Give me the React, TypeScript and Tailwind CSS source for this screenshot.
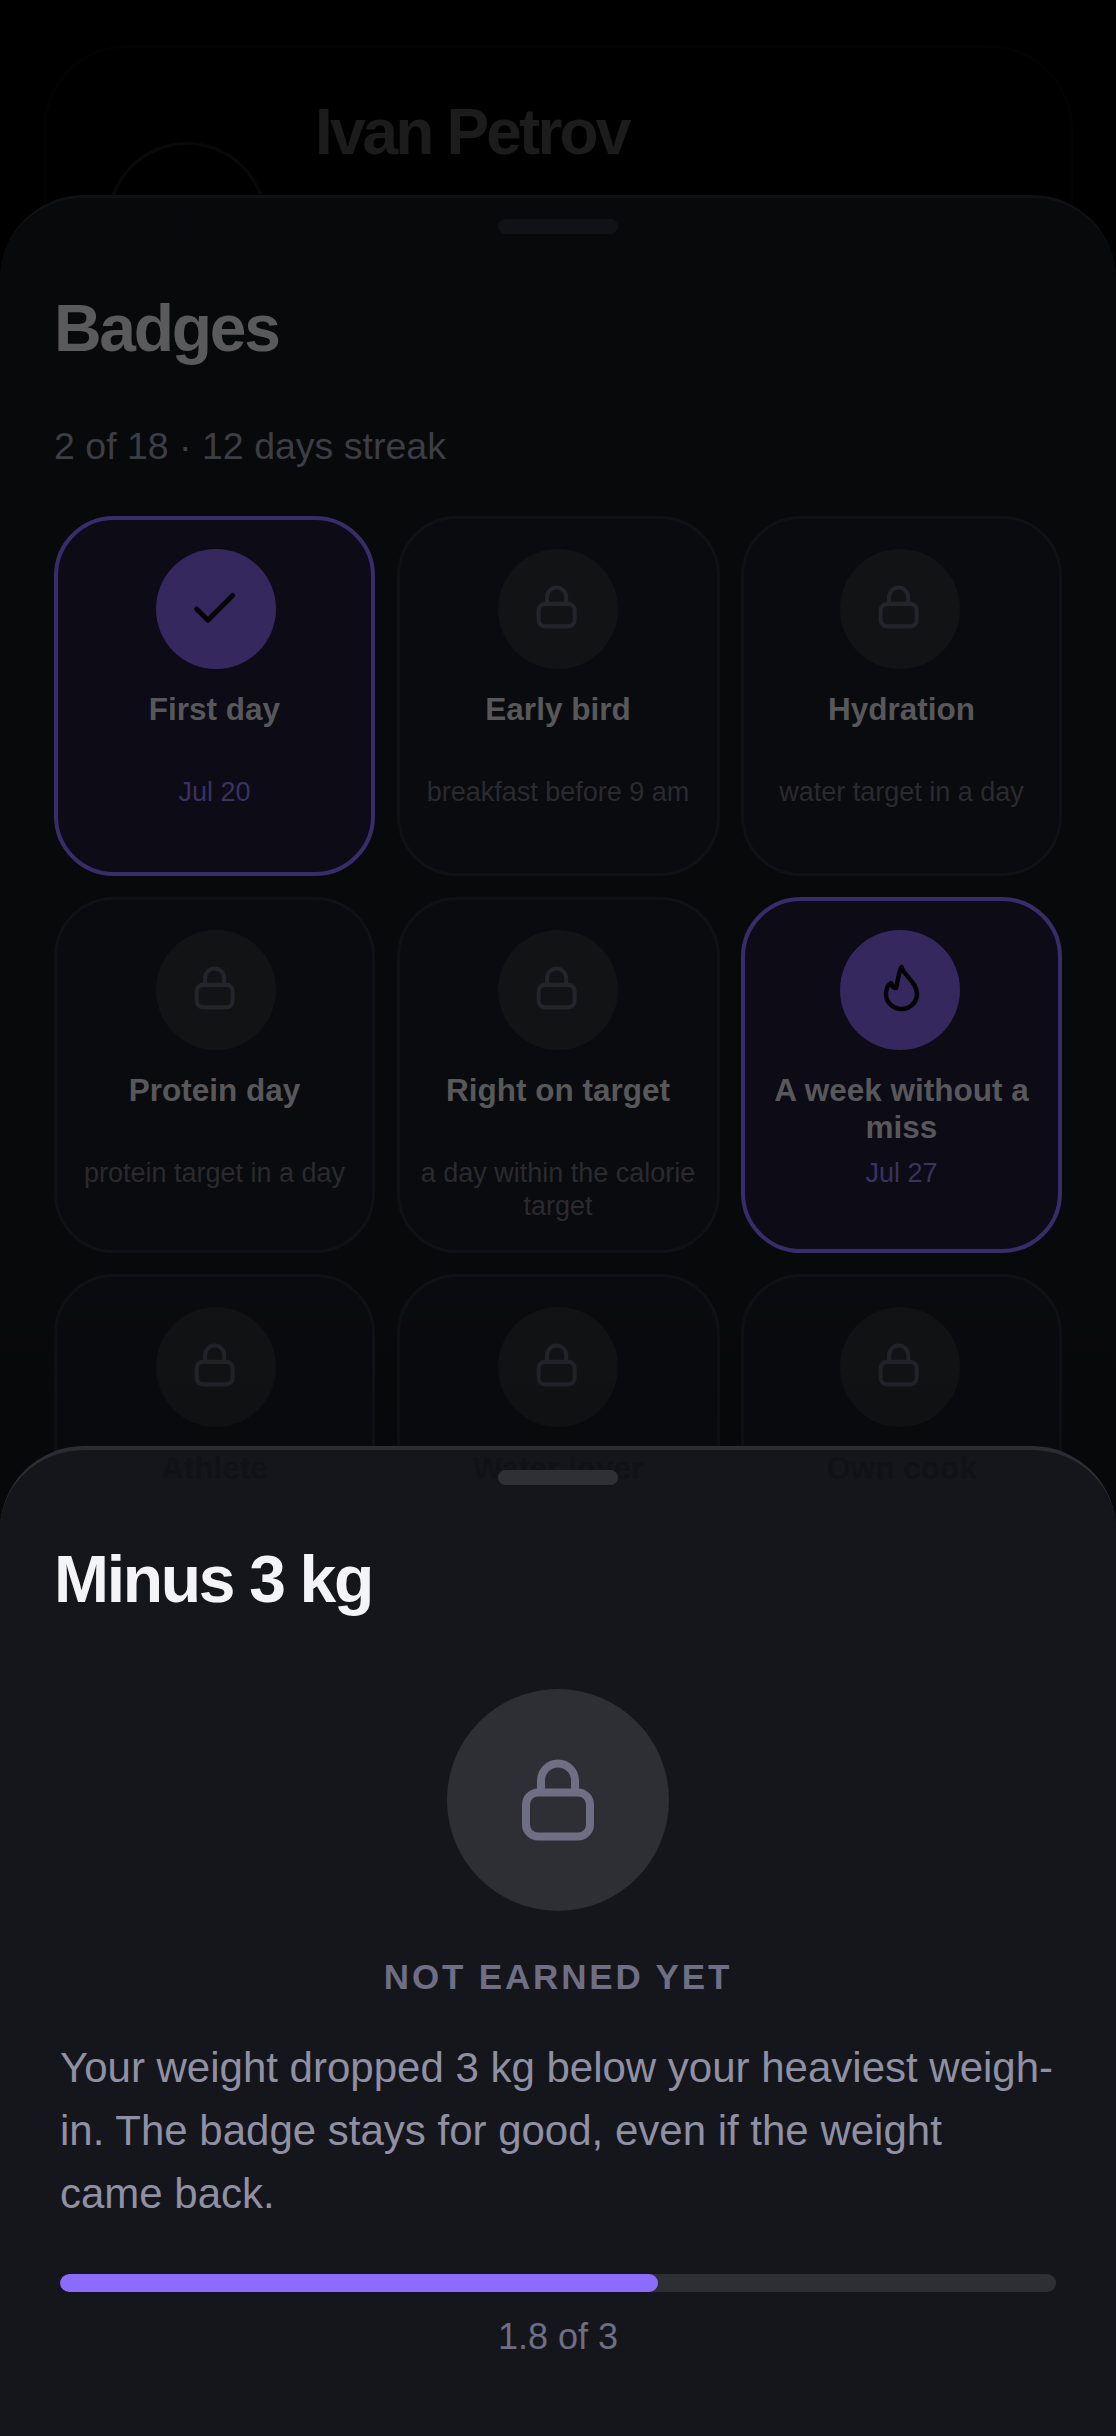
const FONT = "font-['Liberation_Sans',Arial,sans-serif]";

function LockIcon({ className }: { className: string }) {
  return (
    <svg viewBox="0 0 24 24" fill="none" stroke="currentColor" strokeWidth="2" strokeLinecap="round" strokeLinejoin="round" className={className}>
      <rect x="4" y="10.125" width="16" height="11" rx="3" />
      <path d="M7.75 10V7.125a4.25 4.25 0 0 1 8.5 0V10" />
    </svg>
  );
}

function SmallLockIcon() {
  return (
    <svg viewBox="0.6 0.4 24 24" fill="none" stroke="currentColor" strokeWidth="1.8" strokeLinecap="round" strokeLinejoin="round" className="h-[54px] w-[54px]">
      <rect x="4" y="10.125" width="16" height="10" rx="2.8" />
      <path d="M7.75 10V7.125a4.25 4.25 0 0 1 8.5 0V10" />
    </svg>
  );
}

function CheckIcon() {
  return (
    <svg viewBox="0.6 0 24 24" fill="none" stroke="currentColor" strokeWidth="2.2" strokeLinecap="round" strokeLinejoin="round" className="w-[54px] h-[54px]">
      <path d="M20 6 9 17l-5-5" />
    </svg>
  );
}

function FlameIcon() {
  return (
    <svg viewBox="0 0 80 80" fill="none" stroke="currentColor" strokeWidth="4.5" strokeLinecap="round" strokeLinejoin="round" className="w-[80px] h-[80px]">
      <path d="M41.5 17C44 26 57 32 57 44A15.5 15 0 0 1 26 44C26 39 28 35 31 33C32 36 34 38 36 38C38 32 38 24 41.5 17Z" />
    </svg>
  );
}

type Badge = { title: string; sub?: string; earned?: "check" | "flame"; circle: string };

const badges: Badge[] = [
  { title: "First day", sub: "Jul 20", earned: "check", circle: "ml-[3px]" },
  { title: "Early bird", sub: "breakfast before 9 am", circle: "" },
  { title: "Hydration", sub: "water target in a day", circle: "mr-[3px]" },
  { title: "Protein day", sub: "protein target in a day", circle: "ml-[3px]" },
  { title: "Right on target", sub: "a day within the calorie target", circle: "" },
  { title: "A week without a miss", sub: "Jul 27", earned: "flame", circle: "mr-[3px]" },
  { title: "Athlete", circle: "ml-[3px]" },
  { title: "Water lover", circle: "" },
  { title: "Own cook", circle: "mr-[3px]" },
];

function BadgeCard({ badge }: { badge: Badge }) {
  const earned = !!badge.earned;
  return (
    <div
      className={
        earned
          ? "flex flex-col items-center rounded-[60px] border-[4.5px] border-[#382c6a] bg-[#0c0b16] px-[18px] pt-[28.5px]"
          : "flex flex-col items-center rounded-[60px] border-[3px] border-[#101114] bg-[#0a0b0e] px-[20px] pt-[30px]"
      }
    >
      <div
        className={
          earned
            ? `flex h-[120px] w-[120px] shrink-0 items-center justify-center rounded-full bg-[#35285f] text-[#030305] ${badge.circle}`
            : `flex h-[120px] w-[120px] shrink-0 items-center justify-center rounded-full bg-[#121315] text-[#24242b] ${badge.circle}`
        }
      >
        {badge.earned === "check" ? <CheckIcon /> : badge.earned === "flame" ? <FlameIcon /> : <SmallLockIcon />}
      </div>
      <div className="mt-[22px] min-h-[74px] text-center text-[31.5px] leading-[37px] font-bold text-[#58585b]">{badge.title}</div>
      {badge.sub && (
        <div className={earned ? "mt-[11px] text-center text-[27px] leading-[33px] text-[#3a3260]" : "mt-[11px] text-center text-[27px] leading-[33px] text-[#2a2a30]"}>
          {badge.sub}
        </div>
      )}
    </div>
  );
}

export default function App() {
  return (
    <div className={`relative h-[2436px] w-[1116px] overflow-hidden bg-black ${FONT}`}>
      {/* page behind the sheets */}
      <div className="mx-[43px] mt-[45px] flex h-[400px] items-start rounded-[84px] border-[3px] border-[#030304] pl-[61px]">
        <div className="mt-[94px] flex h-[160px] w-[160px] shrink-0 items-center justify-center rounded-full border-[3px] border-[#09090b] text-[60px] text-[#111216]">
          I
        </div>
        <div className="ml-[48px] mt-[45px]">
          <div className="text-[64px] leading-[78px] font-bold tracking-[-0.045em] text-[#1c1c1c]">Ivan Petrov</div>
          <div className="mt-[22px] text-[36px] leading-[44px] text-[#0f0f11]">@ivanp</div>
        </div>
      </div>

      {/* badges sheet */}
      <div className="absolute inset-x-0 top-[195px] bottom-0 rounded-t-[84px] border-t-[3px] border-[#101115] bg-[#08090c]/95">
        <div className="mx-auto mt-[21px] h-[15px] w-[120px] rounded-full bg-[#111215]" />
        <div className="px-[54px]">
          <h1 className="mt-[55px] text-[66px] leading-[78px] font-bold tracking-[-0.035em] text-[#5a5a5d]">Badges</h1>
          <p className="mt-[54px] text-[37.5px] leading-[50px] text-[#3d3d45]">2 of 18 · 12 days streak</p>
          <div className="mt-[45px] grid grid-cols-[321px_323px_321px] grid-rows-[360px_356px_360px] gap-x-[21.5px] gap-y-[21px]">
            {badges.map((b) => (
              <BadgeCard key={b.title} badge={b} />
            ))}
          </div>
        </div>
        <div className="absolute inset-x-0 top-[1045px] bottom-0 bg-gradient-to-b from-black/0 to-black/70" />
      </div>

      {/* detail sheet */}
      <div className="absolute inset-x-0 top-[1446px] bottom-0 rounded-t-[84px] border-t-[4px] border-[#2c2c33] bg-[#15161b]">
        <div className="absolute inset-x-[54px] top-0 grid grid-cols-[321px_323px_321px] gap-x-[21.5px] text-center text-[31.5px] leading-[37px] font-bold text-[#111217]">
          <div>Athlete</div>
          <div>Water lover</div>
          <div>Own cook</div>
        </div>
        <div className="relative mx-auto mt-[20px] h-[15px] w-[120px] rounded-full bg-[#2f2f36]" />
        <h2 className="mt-[55px] px-[54px] text-[66px] leading-[78px] font-bold tracking-[-0.035em] text-[#f4f4f8]">Minus 3 kg</h2>
        <div className="mx-auto mt-[71px] flex h-[222px] w-[222px] items-center justify-center rounded-full bg-[#2e2e35] text-[#6e6e85]">
          <LockIcon className="h-[96px] w-[96px]" />
        </div>
        <div className="mt-[46px] text-center text-[35px] leading-[40px] font-bold tracking-[2.85px] text-[#6e6e85]">NOT EARNED YET</div>
        <p className="mt-[39px] px-[60px] text-[42px] leading-[63px] text-[#9090a5]">
          Your weight dropped 3 kg below your heaviest weigh-in. The badge stays for good, even if the weight came back.
        </p>
        <div className="mx-[60px] mt-[49px] h-[18px] overflow-hidden rounded-full bg-[#2e2e35]">
          <div className="h-full w-[60%] rounded-full bg-[#8b6cff]" />
        </div>
        <div className="mt-[21px] text-center text-[36px] leading-[48px] text-[#6e6e85]">1.8 of 3</div>
      </div>
    </div>
  );
}
